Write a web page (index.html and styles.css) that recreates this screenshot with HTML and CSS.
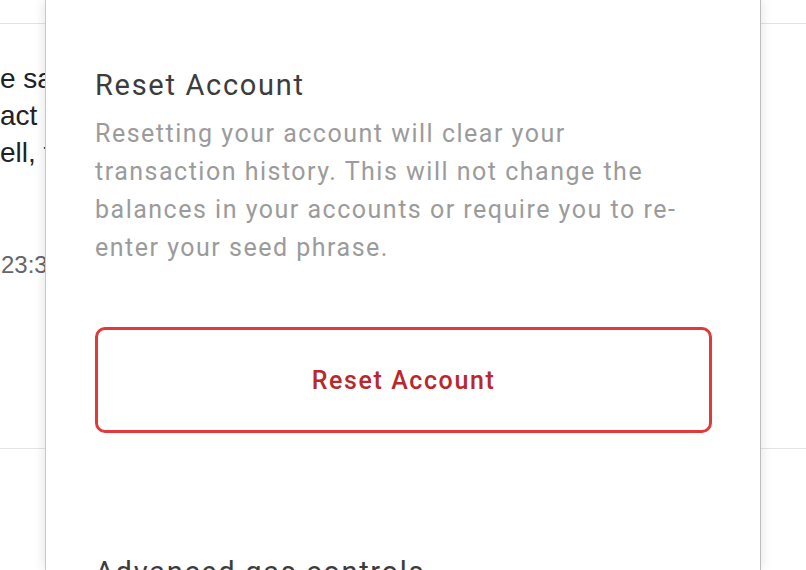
FILE: index.html
```html
<!DOCTYPE html>
<html lang="en">
<head>
<meta charset="utf-8">
<title>Settings - Reset Account</title>
<link rel="stylesheet" href="styles.css">
</head>
<body>
  <div class="page">
    <div class="topbar"></div>
    <div class="msg">
      <div class="msg-line">e same</div>
      <div class="msg-line">act</div>
      <div class="msg-line">ell, t</div>
    </div>
    <div class="time">23:34</div>
    <div class="divider"></div>
  </div>

  <section class="panel">
    <h2 class="title">Reset Account</h2>
    <p class="desc">Resetting your account will clear your transaction history. This will not change the balances in your accounts or require you to re-enter your seed phrase.</p>
    <button class="reset-btn" type="button">Reset Account</button>
    <h2 class="title next">Advanced gas controls</h2>
  </section>
</body>
</html>
```

FILE: styles.css
```css
html, body {
  margin: 0;
  padding: 0;
  height: 100%;
}

body {
  background: #ffffff;
  overflow: hidden;
  position: relative;
  width: 806px;
  height: 570px;
}

.page {
  font-family: "Liberation Sans", Arial, sans-serif;
  white-space: nowrap;
}

.topbar {
  height: 23px;
  border-bottom: 1px solid #e2e2e2;
}

.msg {
  margin-top: 36px;
  font-size: 28px;
  line-height: 37px;
  color: #222222;
}

.time {
  margin-top: 80px;
  font-size: 24px;
  line-height: 28px;
  color: #666666;
  padding-left: 1px;
}

.divider {
  margin-top: 169px;
  height: 1px;
  background: #e4e4e4;
}

.panel {
  position: absolute;
  left: 45px;
  top: 0;
  width: 716px;
  height: 570px;
  box-sizing: border-box;
  background: #ffffff;
  border-left: 1px solid #c9c9c9;
  border-right: 1px solid #bdbdbd;
  box-shadow: 0 0 12px rgba(0, 0, 0, 0.12);
  padding: 68px 48px 0 49px;
  font-family: Roboto, "Noto Sans", sans-serif;
  display: flex;
  flex-direction: column;
  align-items: stretch;
}

.panel > * {
  flex-shrink: 0;
}

.title {
  margin: 0;
  font-size: 29px;
  line-height: 34px;
  font-weight: 400;
  letter-spacing: 1.7px;
  color: #3c3c3c;
  white-space: nowrap;
}

.desc {
  margin: 13px 0 0 0;
  max-width: 600px;
  font-size: 25px;
  line-height: 38px;
  letter-spacing: 1.5px;
  color: #9b9b9b;
}

.reset-btn {
  margin-top: 60px;
  height: 106px;
  border: 3px solid #e03a3a;
  border-radius: 10px;
  background: #ffffff;
  color: #b8282c;
  font-family: Roboto, "Noto Sans", sans-serif;
  font-size: 25px;
  font-weight: 500;
  letter-spacing: 1.6px;
  padding: 0;
  cursor: pointer;
}

.next {
  margin-top: 122px;
}
```
